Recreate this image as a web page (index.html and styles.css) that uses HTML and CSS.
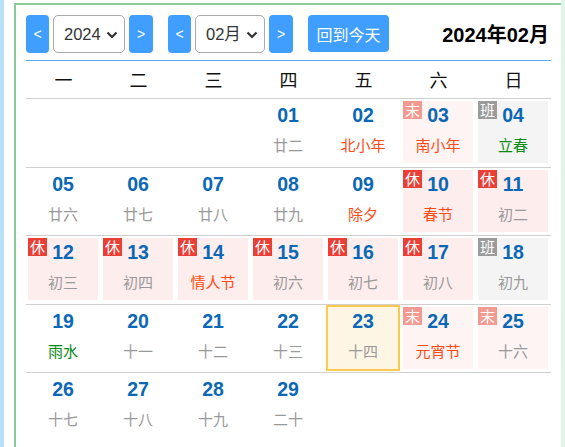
FILE: index.html
```html
<!DOCTYPE html>
<html lang="zh">
<head>
<meta charset="utf-8">
<title>日历</title>
<link rel="stylesheet" href="styles.css">
</head>
<body>
<div class="page">
  <div class="strip-left"></div>
  <div class="calendar">
    <div class="toolbar">
      <div class="group">
        <button class="nav-btn">&lt;</button>
        <div class="select-wrap year">
          <select class="sel"><option>2024</option></select>
          <svg class="chev" width="12" height="8" viewBox="0 0 12 8"><path d="M1.5 1.5 L6 6 L10.5 1.5" fill="none" stroke="#333" stroke-width="2.2"/></svg>
        </div>
        <button class="nav-btn">&gt;</button>
      </div>
      <div class="group">
        <button class="nav-btn">&lt;</button>
        <div class="select-wrap month">
          <select class="sel"><option>02月</option></select>
          <svg class="chev" width="12" height="8" viewBox="0 0 12 8"><path d="M1.5 1.5 L6 6 L10.5 1.5" fill="none" stroke="#333" stroke-width="2.2"/></svg>
        </div>
        <button class="nav-btn">&gt;</button>
      </div>
      <button class="today-btn">回到今天</button>
      <div class="title">2024年02月</div>
    </div>
    <div class="weekdays">
      <div>一</div><div>二</div><div>三</div><div>四</div><div>五</div><div>六</div><div>日</div>
    </div>

    <div class="week">
      <div class="cell"></div>
      <div class="cell"></div>
      <div class="cell"></div>
      <div class="cell"><div class="box"><div class="num">01</div><div class="lunar">廿二</div></div></div>
      <div class="cell"><div class="box"><div class="num">02</div><div class="lunar fest">北小年</div></div></div>
      <div class="cell"><div class="box weekend"><span class="badge mo">末</span><div class="num">03</div><div class="lunar fest">南小年</div></div></div>
      <div class="cell"><div class="box work"><span class="badge ban">班</span><div class="num">04</div><div class="lunar term">立春</div></div></div>
    </div>

    <div class="week">
      <div class="cell"><div class="box"><div class="num">05</div><div class="lunar">廿六</div></div></div>
      <div class="cell"><div class="box"><div class="num">06</div><div class="lunar">廿七</div></div></div>
      <div class="cell"><div class="box"><div class="num">07</div><div class="lunar">廿八</div></div></div>
      <div class="cell"><div class="box"><div class="num">08</div><div class="lunar">廿九</div></div></div>
      <div class="cell"><div class="box"><div class="num">09</div><div class="lunar fest">除夕</div></div></div>
      <div class="cell"><div class="box rest"><span class="badge xiu">休</span><div class="num">10</div><div class="lunar fest">春节</div></div></div>
      <div class="cell"><div class="box rest"><span class="badge xiu">休</span><div class="num">11</div><div class="lunar">初二</div></div></div>
    </div>

    <div class="week">
      <div class="cell"><div class="box rest"><span class="badge xiu">休</span><div class="num">12</div><div class="lunar">初三</div></div></div>
      <div class="cell"><div class="box rest"><span class="badge xiu">休</span><div class="num">13</div><div class="lunar">初四</div></div></div>
      <div class="cell"><div class="box rest"><span class="badge xiu">休</span><div class="num">14</div><div class="lunar fest">情人节</div></div></div>
      <div class="cell"><div class="box rest"><span class="badge xiu">休</span><div class="num">15</div><div class="lunar">初六</div></div></div>
      <div class="cell"><div class="box rest"><span class="badge xiu">休</span><div class="num">16</div><div class="lunar">初七</div></div></div>
      <div class="cell"><div class="box rest"><span class="badge xiu">休</span><div class="num">17</div><div class="lunar">初八</div></div></div>
      <div class="cell"><div class="box work"><span class="badge ban">班</span><div class="num">18</div><div class="lunar">初九</div></div></div>
    </div>

    <div class="week">
      <div class="cell"><div class="box"><div class="num">19</div><div class="lunar term">雨水</div></div></div>
      <div class="cell"><div class="box"><div class="num">20</div><div class="lunar">十一</div></div></div>
      <div class="cell"><div class="box"><div class="num">21</div><div class="lunar">十二</div></div></div>
      <div class="cell"><div class="box"><div class="num">22</div><div class="lunar">十三</div></div></div>
      <div class="cell"><div class="box today"><div class="num">23</div><div class="lunar">十四</div></div></div>
      <div class="cell"><div class="box weekend"><span class="badge mo">末</span><div class="num">24</div><div class="lunar fest">元宵节</div></div></div>
      <div class="cell"><div class="box weekend"><span class="badge mo">末</span><div class="num">25</div><div class="lunar">十六</div></div></div>
    </div>

    <div class="week last">
      <div class="cell"><div class="box"><div class="num">26</div><div class="lunar">十七</div></div></div>
      <div class="cell"><div class="box"><div class="num">27</div><div class="lunar">十八</div></div></div>
      <div class="cell"><div class="box"><div class="num">28</div><div class="lunar">十九</div></div></div>
      <div class="cell"><div class="box"><div class="num">29</div><div class="lunar">二十</div></div></div>
      <div class="cell"></div>
      <div class="cell"></div>
      <div class="cell"></div>
    </div>
  </div>
  <div class="strip-right"></div>
</div>
</body>
</html>
```

FILE: styles.css
```css
* { box-sizing: border-box; }

html, body {
  margin: 0;
  padding: 0;
  background: #fff;
  font-family: "Liberation Sans", "Noto Sans CJK SC", sans-serif;
  overflow: hidden;
}

.page {
  display: flex;
  height: 100vh;
}

.strip-left {
  width: 4px;
  flex: none;
  background: #b8e1f8;
}

.strip-right {
  width: 4px;
  flex: none;
  background: #e1f4e9;
}

.calendar {
  flex: 1;
  margin-left: 10px;
  margin-top: 3px;
  border-top: 2px solid #8cc89a;
  border-left: 2px solid #8cc89a;
  padding: 10px 10px 0 10px;
}

.toolbar {
  display: flex;
  align-items: center;
  height: 46px;
  padding-bottom: 8px;
  border-bottom: 1px solid #5eabf3;
  width: 525px;
}

.group {
  display: flex;
  align-items: center;
  gap: 4px;
  margin-right: 15px;
}

.nav-btn {
  width: 23px;
  height: 38px;
  border: none;
  border-radius: 4px;
  background: #409eff;
  color: #fff;
  font-family: "Liberation Sans", sans-serif;
  font-size: 14px;
  padding: 0;
}

.group .nav-btn:last-child { width: 24px; }

.select-wrap {
  position: relative;
  height: 38px;
}

.select-wrap.year { width: 72px; }
.select-wrap.month { width: 70px; }

.sel {
  appearance: none;
  -webkit-appearance: none;
  width: 100%;
  height: 38px;
  border: 1px solid #aaa;
  border-radius: 5px;
  background: #fff;
  color: #333;
  font-family: "Liberation Sans", "Noto Sans CJK SC", sans-serif;
  font-size: 16.5px;
  padding: 0 0 0 10px;
}

.chev {
  position: absolute;
  right: 7px;
  top: 16px;
  pointer-events: none;
}

.today-btn {
  height: 37px;
  width: 81px;
  border: none;
  border-radius: 4px;
  background: #409eff;
  color: #fff;
  font-family: "Noto Sans CJK SC", sans-serif;
  font-size: 16px;
  padding: 0;
}

.title {
  margin-left: auto;
  margin-right: 2px;
  font-weight: bold;
  font-size: 20px;
  color: #000;
}

.weekdays {
  display: grid;
  grid-template-columns: repeat(7, 75px);
  height: 38px;
  border-bottom: 1px solid #cfcfcf;
}

.weekdays div {
  text-align: center;
  line-height: 37px;
  font-family: "Noto Sans CJK SC", sans-serif;
  font-size: 18px;
  color: #111;
}

.week {
  display: grid;
  grid-template-columns: repeat(7, 75px);
  height: 68.5px;
  border-bottom: 1px solid #cfcfcf;
}

.week.last { border-bottom: none; }

.cell {
  height: 67.5px;
}

.box {
  position: relative;
  height: 62px;
  margin: 2px 3px 3.5px 2px;
  padding-top: 4px;
  text-align: center;
}

.box.rest { background: #fdeded; }
.box.weekend { background: #fff4f4; }
.box.work { background: #f4f4f4; }

.box.today {
  height: 66px;
  margin: 0.5px 1px 1px 0;
  border: 2px solid #f9ca4f;
  background: #fef6e5;
  padding-top: 4px;
}

.num {
  font-weight: bold;
  font-size: 19.5px;
  line-height: 21px;
  color: #0b68b5;
}

.lunar {
  margin-top: 9px;
  font-family: "Noto Sans CJK SC", sans-serif;
  font-size: 15px;
  line-height: 20px;
  color: #999;
}

.lunar.fest { color: #ff4a12; }
.lunar.term { color: #0a8a16; }

.badge {
  position: absolute;
  left: 0;
  top: 0;
  width: 19px;
  height: 18px;
  line-height: 18px;
  font-family: "Noto Sans CJK SC", sans-serif;
  font-size: 15px;
  color: #fff;
  text-align: center;
}

.badge.xiu { background: #ea3f36; }
.badge.mo { background: #f29a92; }
.badge.ban { background: #9b9b9b; }
```
